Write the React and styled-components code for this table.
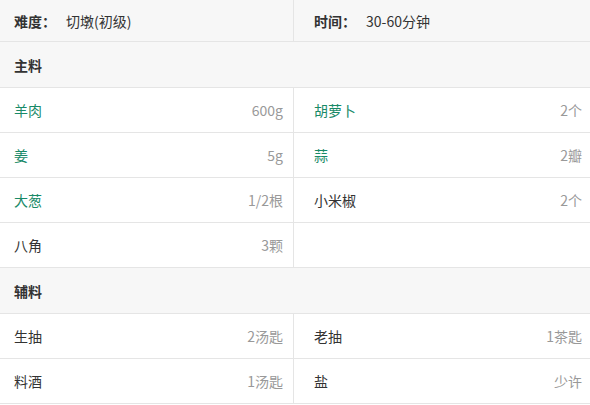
import React from "react";
import styled, { createGlobalStyle } from "styled-components";

const Global = createGlobalStyle`
  *, *::before, *::after { box-sizing: border-box; }
  html, body { margin: 0; padding: 0; background: #fff; }
  body { font-family: "Noto Sans CJK SC", "Noto Sans", sans-serif; font-size: 14px; color: #333; }
`;

const Table = styled.div`
  width: 590px;
  display: flex;
  flex-direction: column;
`;

const Row = styled.div`
  display: grid;
  grid-template-columns: 294px 296px;
  height: ${(p) => p.$h}px;
  border-bottom: 1px solid #e5e5e5;
  background: ${(p) => (p.$gray ? "#f7f7f7" : "#fff")};
`;

const Section = styled.div`
  height: 46px;
  display: flex;
  align-items: center;
  padding-left: 14px;
  font-weight: bold;
  color: #333;
  background: #f7f7f7;
  border-bottom: 1px solid #e5e5e5;
`;

const Cell = styled.div`
  display: flex;
  align-items: center;
  justify-content: space-between;
  padding: 0 ${(p) => (p.$right ? "8px 0 20px" : "10px 0 14px")};
  border-right: ${(p) => (p.$right ? "none" : "1px solid #e5e5e5")};
`;

const InfoCell = styled(Cell)`
  justify-content: flex-start;
`;

const Label = styled.span`
  font-weight: bold;
  width: 52px;
`;

const Name = styled.span`
  color: ${(p) => (p.$green ? "#198a68" : "#333")};
`;

const Amount = styled.span`
  color: #999;
`;

const main = [
  [["羊肉", "600g", true], ["胡萝卜", "2个", true]],
  [["姜", "5g", true], ["蒜", "2瓣", true]],
  [["大葱", "1/2根", true], ["小米椒", "2个", false]],
  [["八角", "3颗", false], null],
];

const side = [
  [["生抽", "2汤匙", false], ["老抽", "1茶匙", false]],
  [["料酒", "1汤匙", false], ["盐", "少许", false]],
];

function Item({ data, right }) {
  return (
    <Cell $right={right}>
      {data && (
        <>
          <Name $green={data[2]}>{data[0]}</Name>
          <Amount>{data[1]}</Amount>
        </>
      )}
    </Cell>
  );
}

function Rows({ list }) {
  return list.map((r, i) => (
    <Row key={i} $h={45}>
      <Item data={r[0]} />
      <Item data={r[1]} right />
    </Row>
  ));
}

export default function App() {
  return (
    <>
      <Global />
      <Table>
        <Row $h={42} $gray>
          <InfoCell>
            <Label>难度：</Label>
            <span>切墩(初级)</span>
          </InfoCell>
          <InfoCell $right>
            <Label>时间：</Label>
            <span>30-60分钟</span>
          </InfoCell>
        </Row>
        <Section>主料</Section>
        <Rows list={main} />
        <Section>辅料</Section>
        <Rows list={side} />
      </Table>
    </>
  );
}
